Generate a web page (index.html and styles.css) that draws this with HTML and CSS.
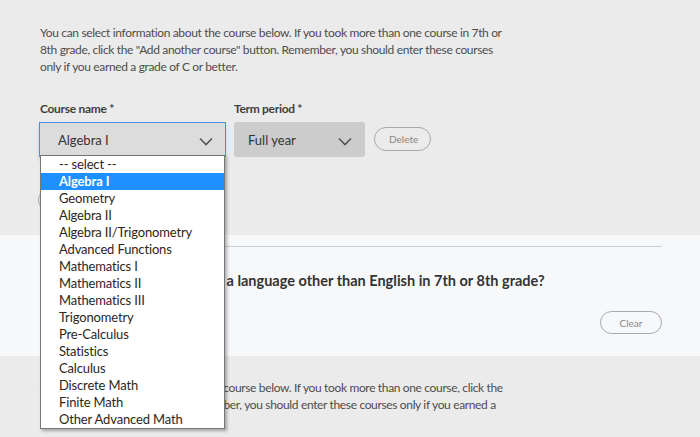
FILE: index.html
```html
<!DOCTYPE html>
<html>
<head>
<meta charset="utf-8">
<link rel="stylesheet" href="styles.css">
</head>
<body>
<section class="sec sec-top">
  <p class="intro">You can select information about the course below. If you took more than one course in 7th or 8th grade, click the "Add another course" button. Remember, you should enter these courses only if you earned a grade of C or better.</p>
  <div class="fields">
    <div class="field">
      <div class="label">Course name *</div>
      <div class="select course">
        <span>Algebra I</span>
        <svg class="chev" width="14" height="9" viewBox="0 0 14 9"><path d="M1 1.5 L7 7.5 L13 1.5" fill="none" stroke="#555" stroke-width="1.6"/></svg>
      </div>
    </div>
    <div class="field">
      <div class="label">Term period *</div>
      <div class="select term">
        <span>Full year</span>
        <svg class="chev" width="14" height="9" viewBox="0 0 14 9"><path d="M1 1.5 L7 7.5 L13 1.5" fill="none" stroke="#555" stroke-width="1.6"/></svg>
      </div>
    </div>
    <button class="pill delete">Delete</button>
  </div>
  <button class="pill add">Add another course</button>
</section>
<section class="sec sec-white">
  <div class="rule"></div>
  <h2 class="question">Did you take any course(s) in a language other than English in 7th or 8th grade?</h2>
  <div class="answer-row">
    <div class="radios"><span class="radio"></span> Yes <span class="radio"></span> No</div>
    <button class="pill clear">Clear</button>
  </div>
</section>
<section class="sec sec-bottom">
  <p class="intro">You can select information about the course below. If you took more than one course, click the "Add another course" button. Remember, you should enter these courses only if you earned a grade of C or better.</p>
</section>
<ul class="dropdown">
  <li>-- select --</li>
  <li class="sel">Algebra I</li>
  <li>Geometry</li>
  <li>Algebra II</li>
  <li>Algebra II/Trigonometry</li>
  <li>Advanced Functions</li>
  <li>Mathematics I</li>
  <li>Mathematics II</li>
  <li>Mathematics III</li>
  <li>Trigonometry</li>
  <li>Pre-Calculus</li>
  <li>Statistics</li>
  <li>Calculus</li>
  <li>Discrete Math</li>
  <li>Finite Math</li>
  <li>Other Advanced Math</li>
</ul>
</body>
</html>
```
FILE: styles.css
```css
html, body {
  margin: 0;
  padding: 0;
}
body {
  font-family: Lato, "Open Sans", sans-serif;
  color: #4a4a4a;
  background: #ebebeb;
  position: relative;
  height: 437px;
  overflow: hidden;
}
.sec {
  padding: 0 38px 0 40px;
}
.sec-top {
  height: 235px;
  box-sizing: border-box;
  padding-top: 24px;
  background: #ebebeb;
}
.intro {
  margin: 0;
  width: 470px;
  font-size: 12px;
  letter-spacing: -0.35px;
  line-height: 17px;
  color: #4d4d4d;
}
.fields {
  display: flex;
  align-items: flex-end;
  gap: 8px;
  margin-top: 25px;
}
.label {
  font-size: 12px;
  font-weight: 700;
  letter-spacing: -0.3px;
  line-height: 17px;
  color: #3f3f3f;
  margin-bottom: 5px;
}
.select {
  height: 35px;
  box-sizing: border-box;
  display: flex;
  align-items: center;
  justify-content: space-between;
  font-size: 13px;
  color: #333;
}
.course {
  width: 187px;
  margin-left: -1px;
  border: 1px solid #4a90e2;
  background: #dcdcdc;
  padding: 0 12px 0 18px;
  box-shadow: 0 3px 4px rgba(0,0,0,0.12);
}
.term {
  width: 131px;
  background: #cccccc;
  border-radius: 3px;
  padding: 0 13px 0 14px;
}
.chev {
  margin-top: 3px;
}
.pill {
  font-family: Lato, "Open Sans", sans-serif;
  background: transparent;
  border: 1px solid #a8a8a8;
  border-radius: 12px;
  color: #888;
  font-size: 10px;
  height: 24px;
  padding: 0 14px;
}
.delete {
  margin-left: 1px;
  margin-bottom: 6px;
  width: 57px;
}
.add {
  margin-top: 31px;
  margin-left: -2px;
  width: 150px;
}
.sec-white {
  background: #f7f8fa;
  height: 121px;
  box-sizing: border-box;
  padding-top: 11px;
}
.rule {
  height: 1px;
  background: #cfcfcf;
  width: 622px;
}
.question {
  margin: 25px 0 0;
  font-size: 14.5px;
  font-weight: 700;
  line-height: 18px;
  color: #333;
}
.answer-row {
  display: flex;
  justify-content: space-between;
  align-items: center;
  width: 622px;
  margin-top: 21px;
}
.radios {
  font-size: 12px;
  display: flex;
  align-items: center;
  gap: 6px;
}
.radio {
  width: 12px;
  height: 12px;
  border: 1px solid #888;
  border-radius: 50%;
  display: inline-block;
}
.clear {
  width: 62px;
  height: 23px;
}
.sec-bottom {
  padding-top: 23px;
  height: 81px;
  box-sizing: border-box;
}
.dropdown {
  position: absolute;
  left: 40px;
  top: 155px;
  width: 185px;
  margin: 0;
  padding: 0;
  list-style: none;
  background: #fff;
  border: 1px solid #767676;
  box-sizing: border-box;
  box-shadow: 2px 2px 3px rgba(0,0,0,0.3);
}
.dropdown li {
  height: 17px;
  line-height: 16px;
  padding-left: 18px;
  font-size: 13px;
  letter-spacing: -0.15px;
  color: #2e2620;
}
.dropdown li.sel {
  background: #1e90ff;
  color: #fff;
  font-weight: 700;
}
```
